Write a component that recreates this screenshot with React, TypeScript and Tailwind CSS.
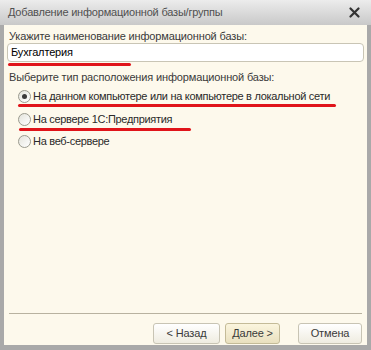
import React, { useState } from 'react';

const options = [
  'На данном компьютере или на компьютере в локальной сети',
  'На сервере 1С:Предприятия',
  'На веб-сервере',
];

function Radio({ checked }: { checked: boolean }) {
  return (
    <span className="w-[13px] h-[13px] rounded-full border border-[#9a9a8e] bg-gradient-to-br from-[#e4e4dc] to-white flex items-center justify-center shrink-0">
      {checked && <span className="w-[5px] h-[5px] rounded-full bg-[#3a3a3a]" />}
    </span>
  );
}

export default function App() {
  const [selected, setSelected] = useState(0);

  return (
    <div className="w-[371px] h-[350px] bg-[#a9a9a9] px-[4px] pb-[5px] flex flex-col text-[11px] text-[#3a3a3a] font-['Liberation_Sans',Arial,sans-serif]">
      {/* Title bar */}
      <div className="h-[25px] -mx-[4px] px-[8px] flex items-center justify-between bg-gradient-to-b from-[#ececec] to-[#c9c9c9] text-[#505050] text-[11px] tracking-[-0.2px]">
        <span>Добавление информационной базы/группы</span>
        <svg width="11" height="11" viewBox="0 0 11 11" className="mr-[3px]">
          <path d="M1.5 1.5 L9.5 9.5 M9.5 1.5 L1.5 9.5" stroke="#333" strokeWidth="2.2" strokeLinecap="round" />
        </svg>
      </div>

      {/* Body */}
      <div className="flex-1 bg-[#fdf9ec] flex flex-col px-[3px] tracking-[-0.15px]">
        <div className="pt-[4px] pl-[2px] leading-[14px]">Укажите наименование информационной базы:</div>
        <div className="h-[19px] bg-white border border-[#c9c5b5] rounded-[4px] flex items-center px-[3px] text-black">
          Бухгалтерия
        </div>
        <div className="ml-[1px] mt-[1px] w-[123px] h-[3px] rounded-full bg-[#e0141a]" />

        <div className="mt-[4px] pl-[2px] leading-[14px]">Выберите тип расположения информационной базы:</div>

        <div className="mt-[5px] pl-[11px] flex flex-col text-[#2a2a2a] tracking-[-0.3px]">
          {options.map((o, i) => (
            <div key={o} className="flex flex-col">
              <label
                className="flex items-center gap-[2px] h-[15px] cursor-default"
                onClick={() => setSelected(i)}
              >
                <Radio checked={selected === i} />
                <span>{o}</span>
              </label>
              {i === 0 && <div className="w-[318px] h-[3px] rounded-full bg-[#e0141a]" />}
              {i === 1 && <div className="mt-[1px] ml-[1px] w-[172px] h-[3px] rounded-full bg-[#e0141a]" />}
              {i === 0 && <div className="h-[5px]" />}
              {i === 1 && <div className="h-[3px]" />}
            </div>
          ))}
        </div>

        <div className="flex-1" />

        <div className="mx-[2px] border-t border-[#b8b2a0]" />

        <div className="flex justify-end items-center gap-[5px] pt-[9px] pb-[1px] pr-[2px] text-[#3a3a3a] text-[11px]">
          <button className="w-[67px] h-[21px] rounded-[3px] border border-[#c8c4b4] bg-gradient-to-b from-white to-[#efece0]">
            &lt; Назад
          </button>
          <button className="w-[55px] h-[21px] rounded-[3px] border border-[#c4bb98] bg-gradient-to-b from-[#fbf5de] to-[#e9e0bf]">
            Далее &gt;
          </button>
          <button className="ml-[13px] w-[64px] h-[21px] rounded-[3px] border border-[#c8c4b4] bg-gradient-to-b from-white to-[#efece0]">
            Отмена
          </button>
        </div>
      </div>
    </div>
  );
}
